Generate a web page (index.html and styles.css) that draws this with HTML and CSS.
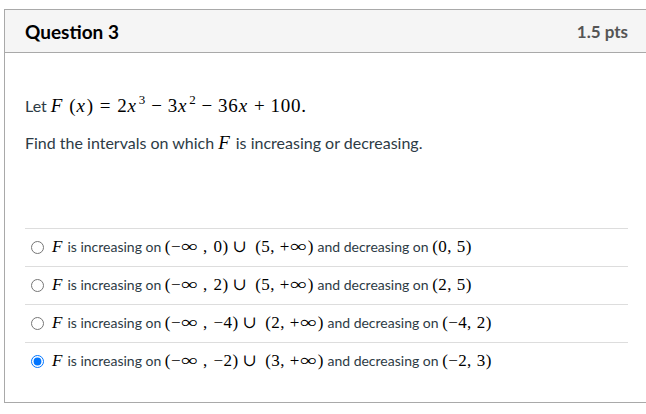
FILE: index.html
```html
<!DOCTYPE html>
<html>
<head>
<meta charset="utf-8">
<link rel="stylesheet" href="styles.css">
</head>
<body>
<div class="card">
  <div class="header">
    <span class="title">Question 3</span>
    <span class="pts">1.5 pts</span>
  </div>
  <div class="body">
    <p class="q">Let <span class="m mq"><i>F</i><span class="fs">(</span><i>x</i>)<span class="rel">=</span>2<i>x</i><sup>3</sup><span class="bin">−</span>3<i>x</i><sup>2</sup><span class="bin">−</span>36<i>x</i><span class="bin">+</span>100.</span></p>
    <p class="q">Find the intervals on which <span class="m mq"><i>F</i></span> is increasing or decreasing.</p>
    <div class="options">
      <label class="opt"><input type="radio" name="a"><span class="m"><i>F</i></span> is increasing on <span class="m">(−<span class="inf">∞</span><span class="pc">,</span>0)<span class="cup">∪</span>(5,<span class="pc2"></span>+<span class="inf">∞</span>)</span> and decreasing on <span class="m">(0,<span class="pc2"></span>5)</span></label>
      <label class="opt"><input type="radio" name="a"><span class="m"><i>F</i></span> is increasing on <span class="m">(−<span class="inf">∞</span><span class="pc">,</span>2)<span class="cup">∪</span>(5,<span class="pc2"></span>+<span class="inf">∞</span>)</span> and decreasing on <span class="m">(2,<span class="pc2"></span>5)</span></label>
      <label class="opt"><input type="radio" name="a"><span class="m"><i>F</i></span> is increasing on <span class="m">(−<span class="inf">∞</span><span class="pc">,</span>−4)<span class="cup">∪</span>(2,<span class="pc2"></span>+<span class="inf">∞</span>)</span> and decreasing on <span class="m">(−4,<span class="pc2"></span>2)</span></label>
      <label class="opt"><input type="radio" name="a" checked><span class="m"><i>F</i></span> is increasing on <span class="m">(−<span class="inf">∞</span><span class="pc">,</span>−2)<span class="cup">∪</span>(3,<span class="pc2"></span>+<span class="inf">∞</span>)</span> and decreasing on <span class="m">(−2,<span class="pc2"></span>3)</span></label>
    </div>
  </div>
</div>
</body>
</html>
```
FILE: styles.css
```css
html, body {
  margin: 0;
  padding: 0;
  background: #fff;
  overflow: hidden;
}
body {
  font-family: Lato, "Liberation Sans", sans-serif;
  color: #2d3b45;
}
.card {
  margin: 9px 0 0 4px;
  border: 1px solid #a9a9a9;
  border-right: none;
}
.header {
  height: 42px;
  background: #f5f5f5;
  border-bottom: 1px solid #a9a9a9;
  display: flex;
  align-items: center;
  justify-content: space-between;
  padding: 0 18px 0 20px;
}
.title {
  font-weight: bold;
  font-size: 19px;
  color: #000;
}
.pts {
  font-weight: bold;
  font-size: 17px;
  color: #555;
}
.body {
  padding: 42px 18px 22px 20px;
}
.q {
  margin: 0 0 16px 0;
  font-size: 16px;
  line-height: 21px;
}
.m {
  font-family: "Liberation Serif", "DejaVu Serif", serif;
  font-size: 17px;
  color: #000;
  letter-spacing: 0.4px;
}
.mq {
  font-size: 19px;
  letter-spacing: 0.8px;
}
.m i {
  font-style: italic;
  padding-right: 1px;
}
.m sup {
  font-size: 13px;
  line-height: 0;
  vertical-align: 8px;
  margin-left: 1px;
}
.fs { margin-left: 5px; }
.rel { margin: 0 6px; }
.bin { margin: 0 5px; }
.inf {
  display: inline-block;
  width: 18px;
  text-align: center;
  transform: scaleX(1.4);
}
.pc { margin: 0 6px 0 4px; }
.pc2 { margin-left: 5px; }
.cup { margin: 0 8px 0 4px; }
.options {
  margin-top: 75px;
}
.opt {
  display: flex;
  align-items: center;
  height: 35px;
  padding-bottom: 2px;
  border-top: 1px solid #ddd;
  font-size: 14px;
  white-space: pre;
}
.opt input {
  margin: 2px 8px 0 6px;
  width: 13px;
  height: 13px;
}
```
